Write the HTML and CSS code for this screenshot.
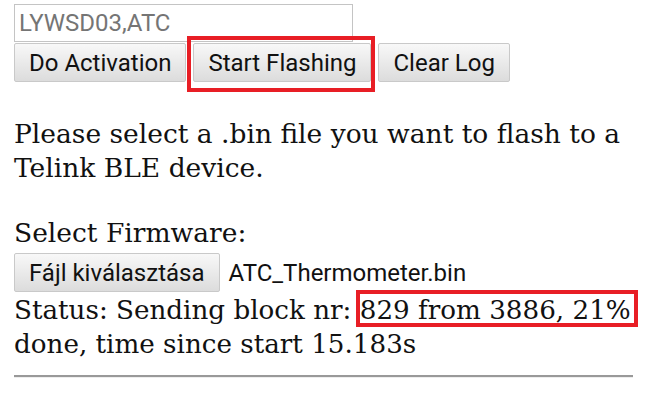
FILE: index.html
```html
<!DOCTYPE html>
<html lang="en">
<head>
	<meta charset="UTF-8">
	<title>Telink Flasher</title>
	<link rel="stylesheet" href="styles.css">
</head>
<body>
	<input id="namePrefix" class="prefix" type="text" value="LYWSD03,ATC">
	<div class="actions">
		<button class="btn">Do Activation</button>
		<span class="mark"><button class="btn">Start Flashing</button></span>
		<button class="btn">Clear Log</button>
	</div>

	<p class="intro">Please select a .bin file you want to flash to a Telink BLE device.</p>

	<p class="label">Select Firmware:</p>
	<div class="file-row">
		<button class="btn">Fájl kiválasztása</button>
		<span class="file-name">ATC_Thermometer.bin</span>
	</div>

	<p class="status">Status: Sending block nr: <span class="mark mark-text">829 from 3886, 21%</span> done, time since start 15.183s</p>

	<hr class="rule">
</body>
</html>
```

FILE: styles.css
```css
body {
	margin: 0;
	padding: 4px 6px 0 14px;
	font-family: "DejaVu Serif", serif;
	font-size: 26.5px;
	line-height: 34px;
	color: #111;
	background: #fff;
}

.prefix {
	display: block;
	box-sizing: border-box;
	width: 339px;
	height: 38px;
	margin: 0;
	padding: 0 4px;
	border: 1px solid #c4c4c4;
	font-family: Roboto, sans-serif;
	font-size: 24px;
	color: #757575;
	outline: none;
}

.actions { display: flex; align-items: flex-start; gap: 7px; margin-top: 1px;}

.btn {
	box-sizing: border-box;
	height: 39px;
	margin: 0;
	padding: 0 14px;
	border: 1px solid #c9c9c9;
	border-radius: 2px;
	background: linear-gradient(#f8f8f8, #dcdcdc);
	font-family: Roboto, sans-serif;
	font-size: 24px;
	color: #111;
}

.mark { position: relative; display: inline-block;}
.mark::after {
	content: "";
	position: absolute;
	top: -7px; bottom: -10px; left: -6px; right: -4px;
	border: 4px solid #e81e25;
	pointer-events: none;
}

.intro { margin: 35px 0 0;}
.label { margin: 31px 0 0;}

.file-row { display: flex; align-items: center; gap: 9px; margin-top: 3px;}
.file-name { font-family: Roboto, sans-serif; font-size: 24px; line-height: 28px;}

.status { margin: 1px 0 0; font-size: 26.2px;}
.mark-text { display: inline; white-space: nowrap;}
.mark-text::after { top: -5px; bottom: -2px; left: -4px; right: -7px;}

.rule {
	margin: 14px 9px 0 0;
	border: 0;
	border-top: 2px solid #999;
	border-bottom: 1px solid #eee;
}
```
